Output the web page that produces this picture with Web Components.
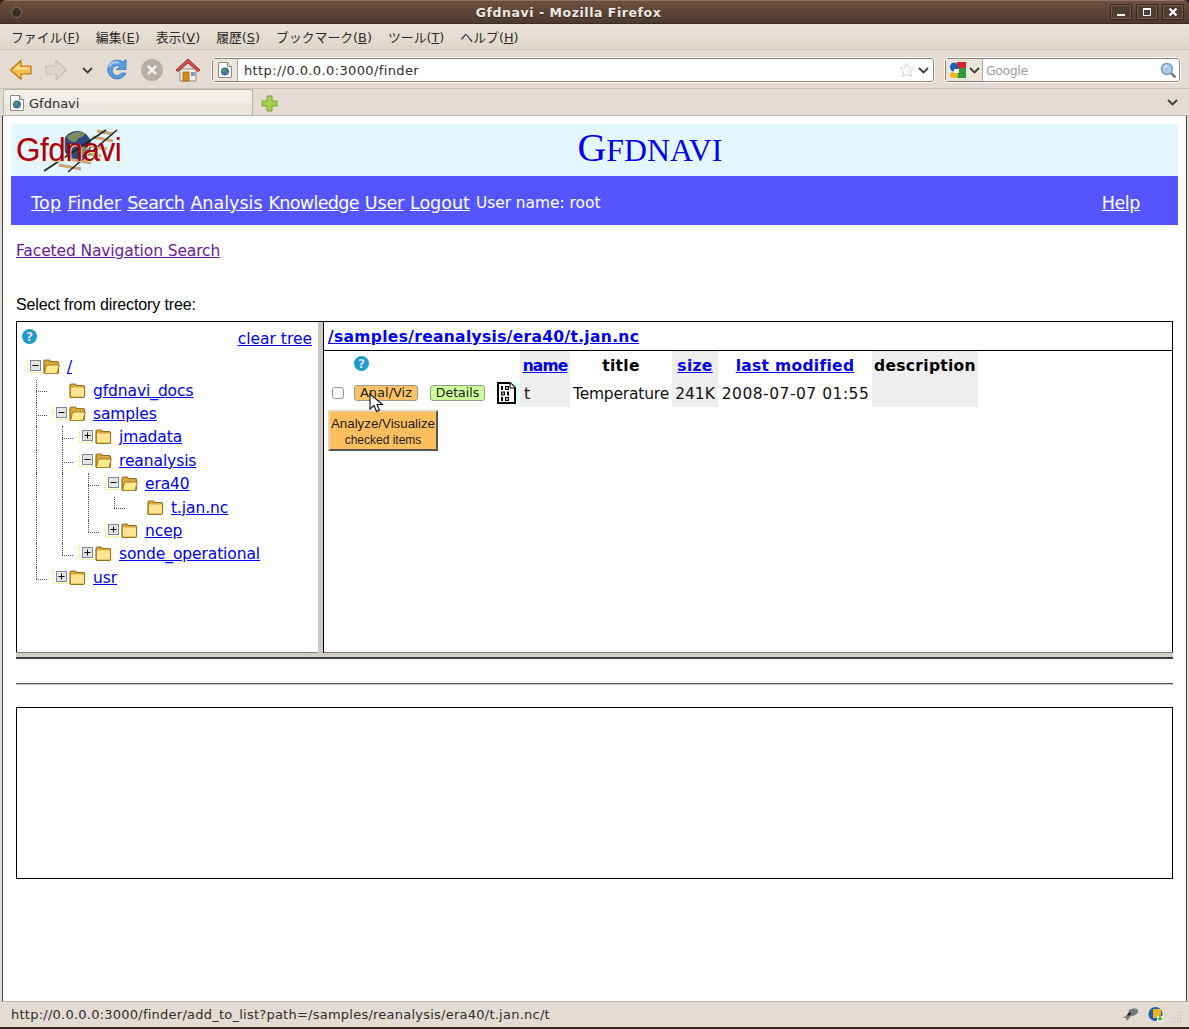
<!DOCTYPE html>
<html>
<head>
<meta charset="utf-8">
<title>Gfdnavi - Mozilla Firefox</title>
<style>
html, body { margin: 0; padding: 0; background: #33251c; }
body { width: 1189px; height: 1029px; overflow: hidden; font-family: "DejaVu Sans", sans-serif; }
</style>
</head>
<body>
<gfd-window>
    <title-bar slot="title">Gfdnavi - Mozilla Firefox</title-bar>
    <menu-bar slot="menu"></menu-bar>
    <nav-toolbar slot="nav"></nav-toolbar>
    <tab-strip slot="tabs"></tab-strip>
    <gfd-page slot="page">
        <gfd-header></gfd-header>
        <gfd-navbar></gfd-navbar>
        <gfd-finder></gfd-finder>
    </gfd-page>
    <status-bar slot="status">http://0.0.0.0:3000/finder/add_to_list?path=/samples/reanalysis/era40/t.jan.nc/t</status-bar>
</gfd-window>

<script>
const CHEVRON = `<svg width="11" height="7" viewBox="0 0 11 7"><path d="M1 1l4.500 4.500L10 1" fill="none" stroke="#3c3c3c" stroke-width="1.800"/></svg>`;
const PAGE_ICON = `<svg width="14" height="16" viewBox="0 0 14 16">
    <path d="M.5.5h9l4 4v11H.5z" fill="#fff" stroke="#8a8a8a"/><path d="M9.500.5v4h4" fill="#ddd" stroke="#8a8a8a"/>
    <circle cx="7" cy="9.500" r="4" fill="#3a6ea5"/><path d="M5 7.500c2-1 3 0 3 1s-2 1-2 2.500c-1 0-2-2-1-3.500zM9 10c1 0 1.500.5 1 1.500l-1.500 1z" fill="#6f9a3a"/>
</svg>`;

class GfdWindow extends HTMLElement {
    constructor() {
        super();
        this.shadow = this.attachShadow({ mode: 'open' });
    }
    connectedCallback() {
        this.shadow.innerHTML = `
        <style>
            :host { display: flex; flex-direction: column; width: 1189px; height: 1029px; }
            .frame { display: flex; flex-direction: column; flex: 1; border-radius: 6px 6px 0 0; overflow: hidden; }
            .grow { display: flex; flex: 1; min-height: 0; background: #e4dcd2; }
        </style>
        <div class="frame">
            <slot name="title"></slot>
            <slot name="menu"></slot>
            <slot name="nav"></slot>
            <slot name="tabs"></slot>
            <div class="grow"><slot name="page"></slot></div>
            <slot name="status"></slot>
        </div>
        `;
    }
}

class TitleBar extends HTMLElement {
    constructor() {
        super();
        this.shadow = this.attachShadow({ mode: 'open' });
    }
    connectedCallback() {
        this.shadow.innerHTML = `
        <style>
            :host { display: flex; align-items: center; position: relative; height: 24px; box-sizing: border-box;
                background: linear-gradient(#6e5040, #4b392e); border-top: 1px solid #8a7264; border-bottom: 1px solid #3a2a20; }
            .dot { position: absolute; left: 11px; top: 6px; width: 9px; height: 9px; border-radius: 50%; background: #3a2c24; border: 1px solid #85756a; }
            .text { flex: 1; text-align: center; color: #efe9e4; font: bold 12.500px "DejaVu Sans", sans-serif; letter-spacing: .55px; padding-right: 52px; text-shadow: 0 1px 0 #2c1f17; }
            .btns { position: absolute; left: 1110px; top: 3px; display: flex; gap: 4px; }
            .btn { width: 22px; height: 16px; box-sizing: border-box; border: 1px solid #2e221b; border-radius: 2px; box-shadow: inset 0 0 0 1px #76604f; background: #4f3d32; display: flex; align-items: center; justify-content: center; }
        </style>
        <span class="dot"></span>
        <span class="text"><slot></slot></span>
        <div class="btns">
            <div class="btn"><svg width="10" height="10"><rect x="1" y="7" width="8" height="2" fill="#fff"/></svg></div>
            <div class="btn"><svg width="10" height="10"><path d="M1.500 1.500h7v7h-7z" fill="none" stroke="#fff"/><rect x="1" y="1" width="8" height="2" fill="#fff"/></svg></div>
            <div class="btn"><svg width="10" height="10"><path d="M1.500 1.500l7 7M8.500 1.500l-7 7" stroke="#fff" stroke-width="2.200"/></svg></div>
        </div>
        `;
    }
}

class MenuBar extends HTMLElement {
    constructor() {
        super();
        this.shadow = this.attachShadow({ mode: 'open' });
    }
    connectedCallback() {
        const items = [['ファイル', 'F'], ['編集', 'E'], ['表示', 'V'], ['履歴', 'S'], ['ブックマーク', 'B'], ['ツール', 'T'], ['ヘルプ', 'H']];
        this.shadow.innerHTML = `
        <style>
            :host { display: flex; align-items: center; height: 26px; padding-left: 3px; box-sizing: border-box;
                background: linear-gradient(#e9e3da, #ded6cb); border-bottom: 1px solid #cfc6ba; color: #2e2a26;
                font: 12.850px "DejaVu Sans", "Noto Sans CJK JP", sans-serif; }
            span { padding: 0 8px; white-space: nowrap; }
        </style>
        ${items.map(i => `<span>${i[0]}(<u>${i[1]}</u>)</span>`).join('')}
        `;
    }
}

class NavToolbar extends HTMLElement {
    constructor() {
        super();
        this.shadow = this.attachShadow({ mode: 'open' });
    }
    connectedCallback() {
        this.shadow.innerHTML = `
        <style>
            :host { display: flex; align-items: center; height: 39px; box-sizing: border-box; padding: 2px 7px 0 9px;
                background: #e4dcd2; border-bottom: 1px solid #cbc2b6; }
            svg { display: block; flex: none; }
            .icons { display: flex; align-items: center; flex: none; width: 203px; }
            .box { display: flex; align-items: center; box-sizing: border-box; height: 24px; background: #fff;
                border: 1px solid #8d8171; border-radius: 3px; outline: 1px solid #fbfaf7; }
            .url { width: 722px; flex: none; }
            .fav { display: flex; align-items: center; justify-content: center; width: 24px; height: 22px; background: #ebe5dc; border-right: 1px solid #b3a998; margin-right: 6px; flex: none; }
            .text { flex: 1; font: 13px "DejaVu Sans", sans-serif; letter-spacing: .38px; color: #2e2e2e; }
            .search { width: 235px; flex: none; margin-left: 11px; }
            .engine { display: flex; align-items: center; gap: 3px; width: 37px; height: 22px; padding-left: 4px; box-sizing: border-box; background: #ebe5dc; border-right: 1px solid #b3a998; margin-right: 3px; flex: none; }
            .ghost { flex: 1; color: #9e9e9e; font: 12.500px "DejaVu Sans", sans-serif; letter-spacing: -.4px; }
        </style>
        <div class="icons">
            <svg width="24" height="24" viewBox="0 0 24 24"><path d="M1.500 12L12 2.500V8h10v8H12v5.500z" fill="#f5bc4e" stroke="#b9790c" stroke-width="1.200" stroke-linejoin="round"/><path d="M4 12l6.500-6v3.500H21v2H9z" fill="#fbdc90"/></svg>
            <svg width="24" height="24" viewBox="0 0 24 24" style="margin-left:11px"><path d="M22.500 12L12 2.500V8H2v8h10v5.500z" fill="#dcd6cc" stroke="#c5beb3" stroke-width="1.200" stroke-linejoin="round"/></svg>
            <span style="margin:0 0 0 14px;width:11px;display:block">${CHEVRON}</span>
            <svg width="24" height="24" viewBox="0 0 24 24" style="margin-left:12px"><path d="M21 15a9.500 9.500 0 1 1-3-11l3-2.500v10h-9.500L15 8.500a5 5 0 1 0 1.500 6.500z" fill="#5a9ade" stroke="#3a76bd" stroke-width=".8" stroke-linejoin="round"/><path d="M4 9c1.500-4 6-6 10-4" fill="none" stroke="#a9cdf2" stroke-width="2"/></svg>
            <svg width="24" height="24" viewBox="0 0 24 24" style="margin-left:11px"><circle cx="12" cy="12" r="11" fill="#b5afa7"/><path d="M8 8l8 8M16 8l-8 8" stroke="#f1eee9" stroke-width="2.600"/></svg>
            <svg width="26" height="26" viewBox="0 0 26 26" style="margin-left:11px"><path d="M5 12h16v12H5z" fill="#f1eee6" stroke="#8f8a80"/><path d="M1 13L13 2l12 11-2 1.500L13 6 3 14.500z" fill="#d0504c" stroke="#a23431" stroke-linejoin="round"/><rect x="8" y="15" width="6" height="9" fill="#d8881e" stroke="#a4640f" stroke-width=".8"/><rect x="16" y="15" width="4" height="4" fill="#7f9bb8"/></svg>
        </div>
        <div class="box url">
            <span class="fav">${PAGE_ICON}</span>
            <span class="text">http://0.0.0.0:3000/finder</span>
            <svg width="16" height="16" viewBox="0 0 16 16" style="margin-right:3px"><path d="M8 1l2.100 4.700 5 .5-3.800 3.300 1.100 5L8 12l-4.400 2.500 1.100-5L.9 6.200l5-.5z" fill="#fff" stroke="#d6d6d6"/></svg>
            <span style="margin-right:4px;display:block;line-height:0">${CHEVRON}</span>
        </div>
        <div class="box search">
            <span class="engine">
                <svg width="16" height="16" viewBox="0 0 16 16"><rect x="7" y="0" width="9" height="7" fill="#d8232a"/><rect x="7" y="6" width="9" height="10" fill="#2f9a3c"/><ellipse cx="4" cy="5" rx="4" ry="4.500" fill="#1e5fc0"/><ellipse cx="4" cy="13" rx="4" ry="3" fill="#f2b71c"/><rect x="4" y="7" width="5" height="4" fill="#fff"/></svg>
                ${CHEVRON}
            </span>
            <span class="ghost">Google</span>
            <svg width="17" height="17" viewBox="0 0 17 17" style="margin-right:2px"><path d="M10.500 10.500l5 5" stroke="#77736b" stroke-width="2.400"/><circle cx="7" cy="7" r="5.500" fill="#a9c9ec" stroke="#7a9cc2" stroke-width="1.400"/><path d="M4 6c.5-1.500 2-2.500 3.500-2" fill="none" stroke="#e8f2fb" stroke-width="1.200"/></svg>
        </div>
        `;
    }
}

class TabStrip extends HTMLElement {
    constructor() {
        super();
        this.shadow = this.attachShadow({ mode: 'open' });
    }
    connectedCallback() {
        this.shadow.innerHTML = `
        <style>
            :host { display: flex; align-items: flex-end; height: 27px; box-sizing: border-box; padding-left: 3px;
                background: #e4dcd2; border-bottom: 1px solid #bcb3a6; }
            .tab { display: flex; align-items: center; gap: 5px; width: 250px; height: 26px; box-sizing: border-box; padding: 1px 0 0 6px;
                background: linear-gradient(#f3f0eb 0, #f1ede7 50%, #e9e4dc 55%, #ece7e0 100%); border: 1px solid #bcb3a6; border-bottom: none; border-radius: 3px 3px 0 0;
                font: 13px "DejaVu Sans", sans-serif; color: #2e2e2e; }
            .plus { margin: 0 0 3px 8px; display: block; }
            .spacer { flex: 1; }
            .more { margin: 0 11px 9px 0; line-height: 0; }
        </style>
        <div class="tab">${PAGE_ICON}<span>Gfdnavi</span></div>
        <svg class="plus" width="17" height="17" viewBox="0 0 17 17"><path d="M6 1h5v5h5v5h-5v5H6v-5H1V6h5z" fill="#a9cf4f" stroke="#7c9f2e" stroke-linejoin="round"/></svg>
        <span class="spacer"></span>
        <span class="more">${CHEVRON}</span>
        `;
    }
}

class GfdPage extends HTMLElement {
    constructor() {
        super();
        this.shadow = this.attachShadow({ mode: 'open' });
    }
    connectedCallback() {
        this.shadow.innerHTML = `
        <style>
            :host { display: block; flex: 1; box-sizing: border-box; margin: 0 2px; border: solid #4d4036; border-width: 0 1px; padding: 8px; background: #fff; }
        </style>
        <slot></slot>
        `;
    }
}

class GfdHeader extends HTMLElement {
    constructor() {
        super();
        this.shadow = this.attachShadow({ mode: 'open' });
    }
    connectedCallback() {
        this.shadow.innerHTML = `
        <style>
            :host { display: flex; align-items: center; justify-content: center; position: relative; height: 52px; background: #e4f7ff; }
            h1 { margin: 0 0 4px 111px; font: 400 39.800px "Liberation Serif", serif; color: #0000ee; text-transform: uppercase; }
            h1 span { font-size: 31.800px; }
            .logo { position: absolute; left: 0; top: 0; width: 115px; height: 52px; }
            .logo svg { position: absolute; left: 22px; top: 1px; }
            .logo b { position: absolute; left: 5px; top: 6px; font: 400 33px/40px "Liberation Sans", sans-serif; letter-spacing: -.4px; color: #a8001c;
                text-shadow: 1px 1px 0 #f3eaa0; transform: scaleX(.95); transform-origin: left top; }
        </style>
        <div class="logo">
            <svg width="90" height="50" viewBox="0 0 90 50">
                <path d="M60 12l20 4M64 6l16 3M52 20l22 4M44 27l24 4M36 34l22 4M26 40l22 4" stroke="#c9a676" stroke-width="3"/>
                <circle cx="44" cy="20" r="14" fill="#2f4a7d"/>
                <path d="M34 12c5-6 14-6 18-3-2 4-6 3-8 6-2 4-7 2-10-3zM48 22c4-2 8-1 8 2-2 5-5 7-8 6z" fill="#7f8a62"/>
                <path d="M11 46L73 5M35 47L84 5" stroke="#222" stroke-width="1.600"/>
            </svg>
            <b>Gfdnavi</b>
        </div>
        <h1>G<span>fdnavi</span></h1>
        `;
    }
}

class GfdNavbar extends HTMLElement {
    constructor() {
        super();
        this.shadow = this.attachShadow({ mode: 'open' });
    }
    connectedCallback() {
        const links = [['Top', .3], ['Finder', 0], ['Search', -.5], ['Analysis', 0], ['Knowledge', -.65], ['User', -.2], ['Logout', 0]];
        this.shadow.innerHTML = `
        <style>
            :host { display: flex; align-items: center; height: 49px; box-sizing: border-box; padding: 4px 38px 0 20px; background: #5555ff; color: #fff; font: 17.500px "DejaVu Sans", sans-serif; }
            a { color: #fff; margin-right: 6px; }
            .user { font-size: 15.400px; margin: 1px 0 0 0; }
            .grow { flex: 1; }
            .help { margin: 0; letter-spacing: -.4px; }
        </style>
        ${links.map(l => `<a href="#" style="letter-spacing:${l[1]}px">${l[0]}</a>`).join('')}
        <span class="user">User name: root</span>
        <span class="grow"></span>
        <a class="help" href="#">Help</a>
        `;
    }
}

class HelpIcon extends HTMLElement {
    constructor() {
        super();
        this.shadow = this.attachShadow({ mode: 'open' });
    }
    connectedCallback() {
        this.shadow.innerHTML = `
        <style>
            :host { display: inline-flex; align-items: center; justify-content: center; width: 15px; height: 15px; border-radius: 50%; background: #1c9cc8;
                color: #f3d9ff; font: bold 12px "DejaVu Sans", sans-serif; }
        </style>
        ?
        `;
    }
}

class TreeView extends HTMLElement {
    constructor() {
        super();
        this.shadow = this.attachShadow({ mode: 'open' });
    }
    // guides: one entry per indent cell, g = line goes on, e = elbow, l = last elbow
    get rows() {
        return [
            { guides: '', exp: 'minus', open: true, name: '/' },
            { guides: 'e', exp: '', open: false, name: 'gfdnavi_docs' },
            { guides: 'e', exp: 'minus', open: true, name: 'samples' },
            { guides: 'ge', exp: 'plus', open: false, name: 'jmadata' },
            { guides: 'ge', exp: 'minus', open: true, name: 'reanalysis' },
            { guides: 'gge', exp: 'minus', open: true, name: 'era40' },
            { guides: 'gggl', exp: '', open: false, name: 't.jan.nc' },
            { guides: 'ggl', exp: 'plus', open: false, name: 'ncep' },
            { guides: 'gl', exp: 'plus', open: false, name: 'sonde_operational' },
            { guides: 'l', exp: 'plus', open: false, name: 'usr' }
        ];
    }
    folder(open) {
        const back = `<path d="M1 14V3.500C1 2.500 1.500 2 2.500 2h3.500l1.500 1.500h6.500c1 0 1.500.5 1.500 1.500v9c0 1-.5 1.500-1.500 1.500h-11C1.500 15.500 1 15 1 14z" fill="#d9a93a" stroke="#94701f" stroke-width="1.200"/>`;
        const front = open
            ? `<path d="M1.500 15.500L3.500 7h12.800l-2.300 8.500z" fill="#ffe98e" stroke="#a5802a"/>`
            : `<rect x="2.500" y="6" width="12" height="8" fill="#ffe591" stroke="#ffe591"/>`;
        return `<svg width="17" height="17" viewBox="0 0 17 17">${back}${front}</svg>`;
    }
    expander(kind) {
        const bar = kind === 'plus' ? '<path d="M5.500 2.500v6" stroke="#000"/>' : '';
        return `<svg width="11" height="11" viewBox="0 0 11 11"><rect x=".5" y=".5" width="10" height="10" fill="#e4e4e0" stroke="#7b8a9a"/><path d="M2.500 5.500h6" stroke="#000"/>${bar}</svg>`;
    }
    connectedCallback() {
        this.shadow.innerHTML = `
        <style>
            :host { display: block; padding: 34.300px 0 0 6px; font: 15.500px "DejaVu Sans", sans-serif; letter-spacing: -.1px; }
            .row { display: flex; height: 23.400px; align-items: stretch; }
            .cell { width: 26px; flex: none; position: relative; }
            .g::before, .e::before, .l::before { content: ''; position: absolute; left: 13px; top: 0; bottom: 0; border-left: 1px dotted #555; }
            .l::before { bottom: 50%; }
            .e::after, .l::after { content: ''; position: absolute; left: 13px; width: 11px; top: 50%; border-top: 1px dotted #555; }
            .node { position: relative; width: 44px; flex: none; }
            .mark { position: absolute; left: 4px; top: 2px; width: 20px; height: 14px; border-left: 1px dotted #ffe94d; border-bottom: 1px dotted #ffe94d; }
            .mark.leaf { left: 20px; width: 3px; top: 14px; height: 3px; }
            .exp { position: absolute; left: 7px; top: 4px; line-height: 0; }
            .fold { position: absolute; left: 20px; top: 2px; line-height: 0; }
            a { color: #0000ee; line-height: 23.400px; white-space: nowrap; }
        </style>
        ${this.rows.map(r => `
            <div class="row">
                ${r.guides.split('').map(g => `<span class="cell ${g}"></span>`).join('')}
                <span class="node">
                    <span class="mark ${r.exp ? '' : 'leaf'}"></span>
                    ${r.exp ? `<span class="exp">${this.expander(r.exp)}</span>` : ''}
                    <span class="fold">${this.folder(r.open)}</span>
                </span>
                <a href="#">${r.name}</a>
            </div>`).join('')}
        `;
    }
}

class FileTable extends HTMLElement {
    constructor() {
        super();
        this.shadow = this.attachShadow({ mode: 'open' });
    }
    connectedCallback() {
        this.shadow.innerHTML = `
        <style>
            :host { display: block; position: relative; font: 15.500px "DejaVu Sans", sans-serif; color: #111; }
            table { border-collapse: collapse; table-layout: fixed; width: 654px; }
            th, td { padding: 2px 0 0; height: 26px; text-align: center; white-space: nowrap; }
            th { font-weight: bold; letter-spacing: .3px; color: #000; }
            th a { color: #0000ee; }
            .bg { background: #eee; }
            .tools { text-align: left; padding: 0; height: 28px; }
            .line { display: flex; align-items: center; height: 28px; }
            .help { padding: 5px 0 0 30px; height: 23px; display: flex; align-items: flex-start; }
            input { appearance: none; width: 12px; height: 12px; margin: 0 10px 0 8px; box-sizing: border-box; border: 1px solid #a49684; border-radius: 3px; background: #fff; flex: none; }
            .pill { box-sizing: border-box; height: 16px; line-height: 14px; border: 1px solid #9a9a8a; border-radius: 3px; font-size: 12.500px; text-align: center; flex: none; color: #222; }
            .viz { width: 64px; background: #ffc266; margin-right: 12px; font-size: 13px; }
            .det { width: 55px; background: #ccff99; margin-right: 12px; }
            .file { flex: none; line-height: 0; width: 23px; background: linear-gradient(90deg, #fff 60%, #e0ffff 60%); }
            .left { text-align: left; padding-left: 4px; }
            .go { box-sizing: border-box; width: 110px; height: 41px; margin: 3px 0 0 4px; background: #ffbf5f; border: 2px solid; border-color: #e8d8b8 #555 #555 #e8d8b8; text-align: center; font-family: "Liberation Sans", sans-serif; color: #222; font-size: 13.300px; line-height: 17px; padding-top: 3px; white-space: nowrap; }
            .go small { display: block; font-size: 12px; line-height: 16px; }
            .cursor { position: absolute; left: 45px; top: 42px; }
        </style>
        <table>
            <colgroup><col style="width:196px"><col style="width:50px"><col style="width:102px"><col style="width:46px"><col style="width:154px"><col style="width:106px"></colgroup>
            <tr>
                <td class="tools"><div class="help"><help-icon></help-icon></div></td>
                <th class="bg"><a href="#" style="letter-spacing:-.9px">name</a></th>
                <th>title</th>
                <th class="bg"><a href="#">size</a></th>
                <th><a href="#">last modified</a></th>
                <th class="bg">description</th>
            </tr>
            <tr>
                <td class="tools"><div class="line">
                    <input type="checkbox">
                    <span class="pill viz">Anal/Viz</span>
                    <span class="pill det">Details</span>
                    <span class="file"><svg width="19" height="22" viewBox="0 0 19 22"><path d="M1 1h12l5 5v15H1z" fill="#fff" stroke="#000" stroke-width="2"/><path d="M13 1v5h5" fill="#fff" stroke="#000"/><path fill-rule="evenodd" d="M4 4h2v4H4zM8 4h4v4H8zM9.300 5v2h1.400V5zM4 9.500h4v4H4zM5.300 10.500v2h1.400v-2zM10 9.500h2v4h-2zM4 15h2v4H4zM8 15h4v4H8zM9.300 16v2h1.400v-2z" fill="#000"/></svg></span>
                </div></td>
                <td class="bg left">t</td>
                <td style="letter-spacing:-.2px">Temperature</td>
                <td class="bg">241K</td>
                <td style="letter-spacing:.5px;padding-left:1px">2008-07-07 01:55</td>
                <td class="bg"></td>
            </tr>
        </table>
        <div class="go">Analyze/Visualize<small>checked items</small></div>
        <svg class="cursor" width="17" height="21" viewBox="0 0 17 21"><path d="M1 1v15l4-3.500 2.500 6 3-1.300-2.500-5.700h5.500z" fill="#fff" stroke="#111" stroke-width="1.100"/></svg>
        `;
    }
}

class GfdFinder extends HTMLElement {
    constructor() {
        super();
        this.shadow = this.attachShadow({ mode: 'open' });
    }
    connectedCallback() {
        this.shadow.innerHTML = `
        <style>
            :host { display: block; padding: 0 5px; font: 15.500px "DejaVu Sans", sans-serif; }
            .visited { display: block; margin-top: 16px; height: 20px; line-height: 20px; color: #6a1b9a; text-decoration: underline; letter-spacing: -.12px; }
            .caption { margin-top: 34px; height: 20px; font: 16px/20px "Liberation Sans", sans-serif; color: #000; letter-spacing: -.12px; }
            .panel { display: flex; box-sizing: border-box; height: 332px; margin-top: 6px; border: 1px solid #000; border-bottom: none; }
            .tree { width: 301px; flex: none; position: relative; box-sizing: border-box; }
            .tree help-icon { position: absolute; left: 5px; top: 7px; }
            .tree .clear { position: absolute; right: 6px; top: 8px; color: #0000ee; }
            .split { width: 5px; flex: none; background: #cdc9c0; border-right: 1px solid #000; }
            .main { flex: 1; min-width: 0; }
            .path { height: 29px; box-sizing: border-box; border-bottom: 1px solid #000; padding: 6px 0 0 4px; }
            .path a { color: #0000ee; font-weight: bold; letter-spacing: .32px; }
            .hr1 { height: 7px; box-sizing: border-box; background: #d0ccc2; border-top: 1px solid #808080; border-bottom: 2px solid #3e3e40; margin-top: -1px; }
            .hr2 { height: 2px; margin-top: 24px; background: linear-gradient(#5a5a5a 50%, #c8c8c8 50%); }
            .box { height: 172px; box-sizing: border-box; margin-top: 22px; border: 1px solid #000; }
        </style>
        <a class="visited" href="#">Faceted Navigation Search</a>
        <div class="caption">Select from directory tree:</div>
        <div class="panel">
            <div class="tree">
                <help-icon></help-icon>
                <a class="clear" href="#">clear tree</a>
                <tree-view></tree-view>
            </div>
            <div class="split"></div>
            <div class="main">
                <div class="path"><a href="#">/samples/reanalysis/era40/t.jan.nc</a></div>
                <file-table></file-table>
            </div>
        </div>
        <div class="hr1"></div>
        <div class="hr2"></div>
        <div class="box"></div>
        `;
    }
}

class StatusBar extends HTMLElement {
    constructor() {
        super();
        this.shadow = this.attachShadow({ mode: 'open' });
    }
    connectedCallback() {
        this.shadow.innerHTML = `
        <style>
            :host { display: flex; align-items: center; height: 28px; box-sizing: border-box; padding: 0 4px 1px 11px; background: #e4dcd2; border-top: 1px solid #bdb4a7; border-bottom: 2px solid #3a2c22; font: 13px "DejaVu Sans", sans-serif; letter-spacing: .24px; color: #2e2e2e; }
            .text { flex: 1; white-space: nowrap; }
            svg { display: block; margin-left: 9px; }
            .grip { margin-left: 7px; margin-top: 6px; }
        </style>
        <span class="text"><slot></slot></span>
        <svg width="17" height="15" viewBox="0 0 17 15"><path d="M1 11l5-4 1-4c3-2 8-2 9 0 1 3-3 6-7 6l-4 5-1-3z" fill="#7c7c7c"/><path d="M5 8c1-2 3-3 4-2s-2 4-4 2z" fill="#222"/></svg>
        <svg width="16" height="17" viewBox="0 0 16 17"><circle cx="7.500" cy="8" r="7" fill="#1f5fb0"/><rect x="5" y="3" width="8" height="9" fill="#f6b21c"/><path d="M9 10h6v6H9z" fill="#eef2e4"/><path d="M12 9v5M10 12l2 2 2-2" stroke="#5aa02c" stroke-width="1.400" fill="none"/></svg>
        <svg class="grip" width="14" height="12" viewBox="0 0 14 12"><path d="M9 1h1v1H9zM6 4h1v1H6zM9 4h1v1H9zM3 7h1v1H3zM6 7h1v1H6zM9 7h1v1H9zM0 10h1v1H0zM3 10h1v1H3zM6 10h1v1H6zM9 10h1v1H9z" fill="#bcb3a6"/></svg>
        `;
    }
}

customElements.define('gfd-window', GfdWindow);
customElements.define('title-bar', TitleBar);
customElements.define('menu-bar', MenuBar);
customElements.define('nav-toolbar', NavToolbar);
customElements.define('tab-strip', TabStrip);
customElements.define('gfd-page', GfdPage);
customElements.define('gfd-header', GfdHeader);
customElements.define('gfd-navbar', GfdNavbar);
customElements.define('help-icon', HelpIcon);
customElements.define('tree-view', TreeView);
customElements.define('file-table', FileTable);
customElements.define('gfd-finder', GfdFinder);
customElements.define('status-bar', StatusBar);
</script>
</body>
</html>
